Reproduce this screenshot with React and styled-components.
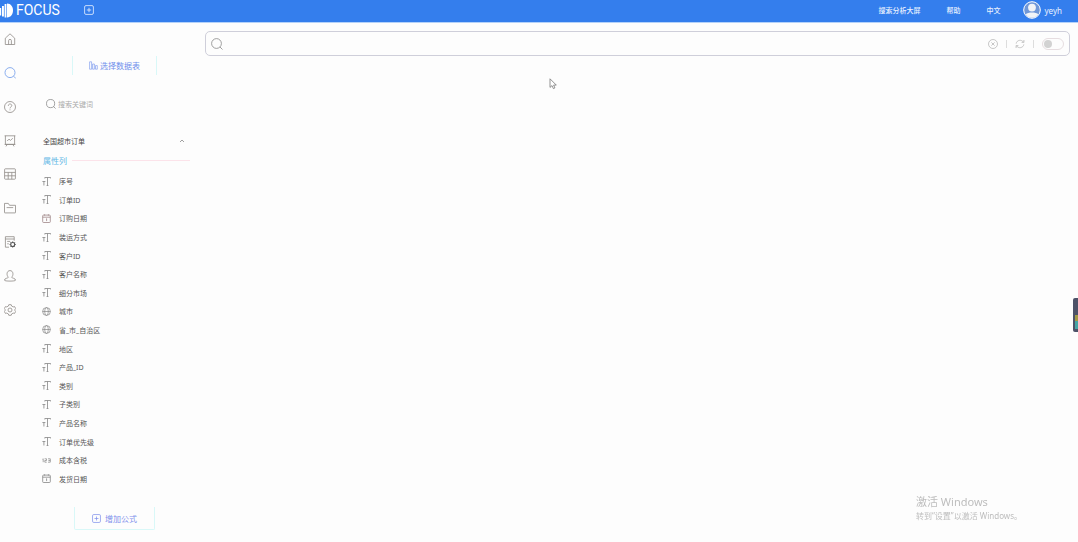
import React, { useState } from "react";
import styled, { createGlobalStyle } from "styled-components";

const columns = [
  { type: "text", name: "序号" },
  { type: "text", name: "订单ID" },
  { type: "date", name: "订购日期", warm: true },
  { type: "text", name: "装运方式" },
  { type: "text", name: "客户ID" },
  { type: "text", name: "客户名称" },
  { type: "text", name: "细分市场" },
  { type: "geo", name: "城市" },
  { type: "geo", name: "省_市_自治区" },
  { type: "text", name: "地区" },
  { type: "text", name: "产品_ID" },
  { type: "text", name: "类别" },
  { type: "text", name: "子类别" },
  { type: "text", name: "产品名称" },
  { type: "text", name: "订单优先级" },
  { type: "number", name: "成本含税" },
  { type: "date", name: "发货日期" },
];

// Side navigation drawings, all on a 12x12 grid
const navItems = [
  {
    label: "首页",
    icon: <path d="M1.3 5.2 6 .8l4.7 4.4v6.3H1.3zM4.6 11.5V7.6q0-1.2 1.4-1.2t1.4 1.2v3.9" />,
  },
  {
    label: "搜索",
    active: true,
    icon: (
      <>
        <circle cx="6" cy="5.6" r="5" />
        <path d="m9.6 9.2 2.3 2.3" />
      </>
    ),
  },
  {
    label: "问答",
    icon: (
      <>
        <circle cx="6" cy="6" r="5.5" />
        <path d="M4.3 4.8C4.3 2.4 7.8 2.5 7.8 4.6 7.8 5.9 6 5.8 6 7.4M6 8.4v.9" />
      </>
    ),
  },
  {
    label: "看板",
    icon: <path d="M.6.8h10.8M1.4.8v8.6h9.2V.8M3.2 6l1.8-1.9 1.4 1.3 2.4-2.1M3.2 9.4l-1.2 2M8.8 9.4l1.2 2M.6 9.4h10.8" />,
  },
  {
    label: "数据表",
    icon: <path d="M.6 1.5q0-.7.7-.7h9.4q.7 0 .7.7v9q0 .7-.7.7H1.3q-.7 0-.7-.7zM.6 4.4h10.8M.6 7.8h10.8M4.2 4.4v6.8M7.8 4.4v6.8" />,
  },
  {
    label: "资源",
    icon: <path d="M.5 10.5V1.4h3.8l1.2 1.9h6v7.2q0 .4-.4.4H.9q-.4 0-.4-.4zM2.6 5.6h6.6" />,
  },
  {
    label: "任务",
    icon: (
      <>
        <path d="M5 11.2H1.4V.7h8.8v4M1.4 3h8.8M3.2 5.4h3M3.2 7.8h1.6" />
        <circle cx="8.7" cy="8.5" r="2" stroke="#555" strokeWidth="1.1" />
        <path stroke="#555" d="M8.7 5.3v1.1M8.7 10.6v1.1M5.5 8.5h1.1M10.8 8.5h1.1M6.4 6.2l.8.8M10.2 10l.8.8M11 6.2l-.8.8M7.2 10l-.8.8" />
      </>
    ),
  },
  {
    label: "用户",
    icon: <path d="M4.4 7.2C2.3 5.5 2.5.6 6 .6s3.7 4.9 1.6 6.6c0 1.2 4 .8 4 3 0 1.2-11.2 1.2-11.2 0 0-2.2 4-1.8 4-3z" />,
  },
  {
    label: "设置",
    icon: (
      <>
        <path d="M4.8.7h2.4l.5 1.4 1.5.8 1.4-.3 1.1 2-.9 1.1v.6l.9 1.1-1.1 2-1.4-.3-1.5.8-.5 1.4H4.8l-.5-1.4-1.5-.8-1.4.3-1.1-2 .9-1.1v-.6L.3 4.600l1.100-2 1.400.300 1.500-.8z" strokeLinejoin="round" />
        <circle cx="6" cy="6" r="2" />
      </>
    ),
  },
];

const SearchGlyph = ({ size }) => (
  <Icon viewBox="0 0 12 12" $size={size}>
    <circle cx="5.5" cy="5.5" r="4.9" />
    <path d="m9 9 2.5 2.5" />
  </Icon>
);

const PlusGlyph = ({ size }) => (
  <Icon viewBox="0 0 10 10" $size={size}>
    <rect x=".6" y=".6" width="8.8" height="8.8" rx="1.4" />
    <path d="M5 2.8v4.4M2.8 5h4.4" />
  </Icon>
);

const TypeGlyph = ({ type }) => (
  <Icon viewBox="0 0 9 9" $size={9}>
    {type === "text" && <path d="M2.8 1.5V.5h5.9v1M5.5.5v8M4.6 8.5h1.8M.4 4.5h3M1.9 4.5v4" />}
    {type === "date" && (
      <>
        <rect x=".7" y="1.1" width="7.6" height="7.4" rx=".8" />
        <path d="M.7 3.2h7.6M2.6.3v1.3M6.4.3v1.3M4.1 5l.5-.3v2.4" />
      </>
    )}
    {type === "geo" && (
      <g strokeWidth=".7">
        <circle cx="4.5" cy="4.5" r="3.9" />
        <ellipse cx="4.5" cy="4.5" rx="1.8" ry="3.9" />
        <path d="M.6 4.5h7.8" />
      </g>
    )}
    {type === "number" && (
      <path strokeWidth=".7" d="m.5 3.2.7-.4v3.4M2.6 2.8h1.9v1.7H2.8v1.7h1.9M6 2.8h2.3v3.4H6M6.4 4.5h1.9" />
    )}
  </Icon>
);

const App = () => {
  const [open, setOpen] = useState(true);

  return (
    <Page>
      <GlobalStyle />
      <Header>
        <Brand href="#home">
          <Logo viewBox="0 0 13 15">
            <path d="M0 5h1.2v7.4H0zM2 3h1.9v10.4H2zM4.6 1h1.8v13.4H4.6zM7 .6c8 0 8 13.8 0 13.8z" />
          </Logo>
          FOCUS
        </Brand>
        <HeaderButton aria-label="新建">
          <PlusGlyph size={10} />
        </HeaderButton>
        <HeaderLinks>
          <HeaderLink href="#screen">搜索分析大屏</HeaderLink>
          <HeaderLink href="#help">帮助</HeaderLink>
          <HeaderLink href="#language">中文</HeaderLink>
          <User href="#user">
            <Avatar viewBox="0 0 18 18">
              <circle cx="9" cy="9" r="8.3" fill="#6f97d8" stroke="#fff" />
              <circle cx="9" cy="6.6" r="3.9" fill="#f2f4f7" />
              <path d="M2.6 13.2C5 10.8 13 10.8 15.4 13.2 12 18 6 18 2.6 13.2z" fill="#f2f4f7" />
            </Avatar>
            yeyh
          </User>
        </HeaderLinks>
      </Header>

      <Body>
        <Nav>
          {navItems.map((item) => (
            <NavItem key={item.label} href="#nav" aria-label={item.label} $active={item.active}>
              <Icon viewBox="0 0 12 12" $size={12}>{item.icon}</Icon>
            </NavItem>
          ))}
        </Nav>

        <Sidebar>
          <SelectTable>
            <Icon viewBox="0 0 9 9" $size={9}>
              <path strokeWidth=".6" d="M.6.8h2v7.4h-2zM3.6 3h1.8v5.2H3.6zM6.5 4.6h1.8v3.6H6.5z" />
            </Icon>
            选择数据表
          </SelectTable>
          <Filter>
            <SearchGlyph size={10} />
            <FilterInput aria-label="搜索关键词" placeholder="搜索关键词" />
          </Filter>
          <TableToggle aria-expanded={open} onClick={() => setOpen(!open)}>
            全国超市订单
            <Chevron viewBox="0 0 6 6" $size={6} $open={open}>
              <path d="m1 4 2-2 2 2" />
            </Chevron>
          </TableToggle>
          {open && (
            <>
              <GroupTitle>属性列</GroupTitle>
              <ColumnList>
                {columns.map((column) => (
                  <Column key={column.name} $warm={column.warm}>
                    <TypeGlyph type={column.type} />
                    {column.name}
                  </Column>
                ))}
              </ColumnList>
            </>
          )}
          <AddFormula>
            <PlusGlyph size={9} />
            增加公式
          </AddFormula>
        </Sidebar>

        <Main>
          <SearchBar>
            <SearchGlyph size={12} />
            <SearchInput aria-label="搜索" />
            <Tools>
              <ToolButton aria-label="清除">
                <Icon viewBox="0 0 10 10" $size={10}>
                  <circle cx="5" cy="5" r="4.5" />
                  <path d="m3.4 3.4 3.2 3.2M6.6 3.4 3.4 6.6" />
                </Icon>
              </ToolButton>
              <Divider />
              <ToolButton aria-label="刷新">
                <Icon viewBox="0 0 10 10" $size={10}>
                  <path d="M1.2 4.6C1.5 1 6.8.1 8.5 3.2M8.9 1v2.4H6.6M8.8 5.4C8.5 9 3.2 9.9 1.5 6.8M1.1 9V6.6h2.3" />
                </Icon>
              </ToolButton>
              <Divider />
              <Switch type="checkbox" aria-label="切换" />
            </Tools>
          </SearchBar>
        </Main>
      </Body>

      <Pointer viewBox="0 0 8 12">
        <path d="M1 .8v8.6l2-1.8 1.4 3 1.5-.7-1.3-2.8h2.7z" />
      </Pointer>
      <Watermark>
        <WatermarkTitle>激活 Windows</WatermarkTitle>
        <WatermarkText>转到“设置”以激活 Windows。</WatermarkText>
      </Watermark>
      <Meter>
        <MeterLevel />
      </Meter>
    </Page>
  );
};

// Styled Components
const GlobalStyle = createGlobalStyle`
  * {
    box-sizing: border-box;
  }

  body {
    margin: 0;
    background: #fdfdfd;
    font-family: "Noto Sans", "Noto Sans CJK SC", sans-serif;
    font-size: 7px;
    color: #555;
  }

  button,
  input {
    padding: 0;
    border: 0;
    background: none;
    font: inherit;
    color: inherit;
  }

  a {
    color: inherit;
    text-decoration: none;
  }
`;

const Page = styled.div`
  display: flex;
  flex-direction: column;
  min-height: 100vh;
`;

const Icon = styled.svg`
  flex: none;
  width: ${({ $size }) => $size}px;
  height: ${({ $size }) => $size}px;
  fill: none;
  stroke: currentColor;
  stroke-width: 0.8;
`;

const Header = styled.header`
  display: flex;
  align-items: center;
  height: 23px;
  padding: 0 16px 2px 0;
  background: #347eed;
  border-bottom: 1px solid #b4d2fa;
  color: #e8f1ff;
`;

const Brand = styled.a`
  display: flex;
  align-items: center;
  gap: 3px;
  font-family: Roboto, sans-serif;
  font-size: 14px;
  color: #fff;
`;

const Logo = styled.svg`
  width: 13px;
  height: 15px;
  fill: #fff;
`;

const HeaderButton = styled.button`
  display: flex;
  margin-left: 24px;
`;

const HeaderLinks = styled.nav`
  display: flex;
  align-items: center;
  gap: 26px;
  margin-left: auto;
`;

const HeaderLink = styled.a`
  font-weight: 500;
`;

const User = styled.a`
  display: flex;
  align-items: center;
  gap: 4px;
  margin-left: -4px;
  font-size: 8px;
`;

const Avatar = styled.svg`
  width: 18px;
  height: 18px;
`;

const Body = styled.div`
  display: flex;
  flex: 1;
`;

const Nav = styled.nav`
  display: grid;
  grid-auto-rows: 1fr;
  width: 42px;
  height: 304px;
`;

const NavItem = styled.a`
  display: flex;
  align-items: center;
  padding: 0 0 1px 4px;
  color: ${({ $active }) => ($active ? "#6f9bea" : "#8f8a86")};
`;

const Sidebar = styled.aside`
  display: flex;
  flex-direction: column;
  width: 148px;
  padding-top: 33px;
`;

const SelectTable = styled.button`
  display: flex;
  align-items: center;
  justify-content: center;
  gap: 2px;
  width: 85px;
  height: 19px;
  margin-left: 30px;
  border: solid #d9f8f8;
  border-width: 0 1px;
  font-size: 8px;
  color: #6f8fec;
`;

const Filter = styled.label`
  display: flex;
  align-items: center;
  gap: 2px;
  height: 12px;
  margin: 23px 0 0 4px;
  color: #777;
`;

const FilterInput = styled.input`
  flex: 1;
  min-width: 0;
  outline: none;

  &::placeholder {
    color: #aaa;
  }
`;

const TableToggle = styled.button`
  display: flex;
  align-items: center;
  justify-content: space-between;
  height: 12px;
  margin-top: 25px;
  padding: 0 5px 0 1px;
  color: #444;
`;

const Chevron = styled(Icon)`
  color: #888;
  transform: rotate(${({ $open }) => ($open ? "0deg" : "180deg")});
`;

const GroupTitle = styled.div`
  display: flex;
  align-items: center;
  gap: 5px;
  height: 12px;
  margin: 7px 0 0 1px;
  font-size: 8px;
  color: #62b9e6;

  &::after {
    content: "";
    flex: 1;
    height: 1px;
    background: #fce3ea;
  }
`;

const ColumnList = styled.ul`
  display: grid;
  grid-auto-rows: 1fr;
  height: 316px;
  margin: 6px 0 0;
  padding: 0;
  list-style: none;
`;

const Column = styled.li`
  display: flex;
  align-items: center;
  gap: 8px;

  svg {
    color: ${({ $warm }) => ($warm ? "#a08688" : "#858585")};
  }
`;

const AddFormula = styled.button`
  display: flex;
  align-items: center;
  justify-content: center;
  gap: 4px;
  width: 81px;
  height: 23px;
  margin: 19px 0 12px 32px;
  border: solid #d9f8f8;
  border-width: 0 1px 1px;
  border-radius: 0 0 2px 2px;
  font-size: 8px;
  color: #7d90ec;
`;

const Main = styled.main`
  flex: 1;
  padding: 8px 8px 0 15px;
`;

const SearchBar = styled.div`
  display: flex;
  align-items: center;
  height: 25px;
  padding: 0 5px;
  border: 1px solid #cfcfda;
  border-radius: 5px;
  color: #888;
`;

const SearchInput = styled.input`
  flex: 1;
  min-width: 0;
  margin-left: 6px;
  font-size: 8px;
  outline: none;
`;

const Tools = styled.div`
  display: flex;
  align-items: center;
  gap: 8px;
`;

const ToolButton = styled.button`
  display: flex;
  color: #b9b9b9;
`;

const Divider = styled.span`
  width: 1px;
  height: 8px;
  background: #ddd;
`;

const Switch = styled.input`
  appearance: none;
  display: flex;
  align-items: center;
  width: 22px;
  height: 12px;
  margin: 0;
  padding: 0 1px;
  border: 1px solid #e6dde0;
  border-radius: 6px;

  &::before {
    content: "";
    width: 8px;
    height: 8px;
    border-radius: 50%;
    background: #d2d2d2;
  }

  &:checked {
    justify-content: flex-end;
  }
`;

const Pointer = styled.svg`
  position: absolute;
  top: 78px;
  left: 549px;
  width: 8px;
  height: 12px;
  fill: #fff;
  stroke: #777;
  stroke-width: 0.8;
`;

const Watermark = styled.div`
  position: fixed;
  right: 50px;
  bottom: 20px;
  width: 112px;
  white-space: nowrap;
  color: #bdbdbd;
`;

const WatermarkTitle = styled.div`
  font-size: 11px;
  line-height: 14px;
`;

const WatermarkText = styled.div`
  font-size: 8px;
  line-height: 13px;
`;

const Meter = styled.div`
  position: fixed;
  top: 298px;
  right: 0;
  display: flex;
  align-items: flex-end;
  width: 5px;
  height: 34px;
  padding: 0 0 3px 2px;
  border-radius: 2px 0 0 2px;
  background: #4d5268;
`;

const MeterLevel = styled.span`
  width: 3px;
  height: 14px;
  background: linear-gradient(#a39a45 6px, #45a5a5 6px);
`;

export default App;
